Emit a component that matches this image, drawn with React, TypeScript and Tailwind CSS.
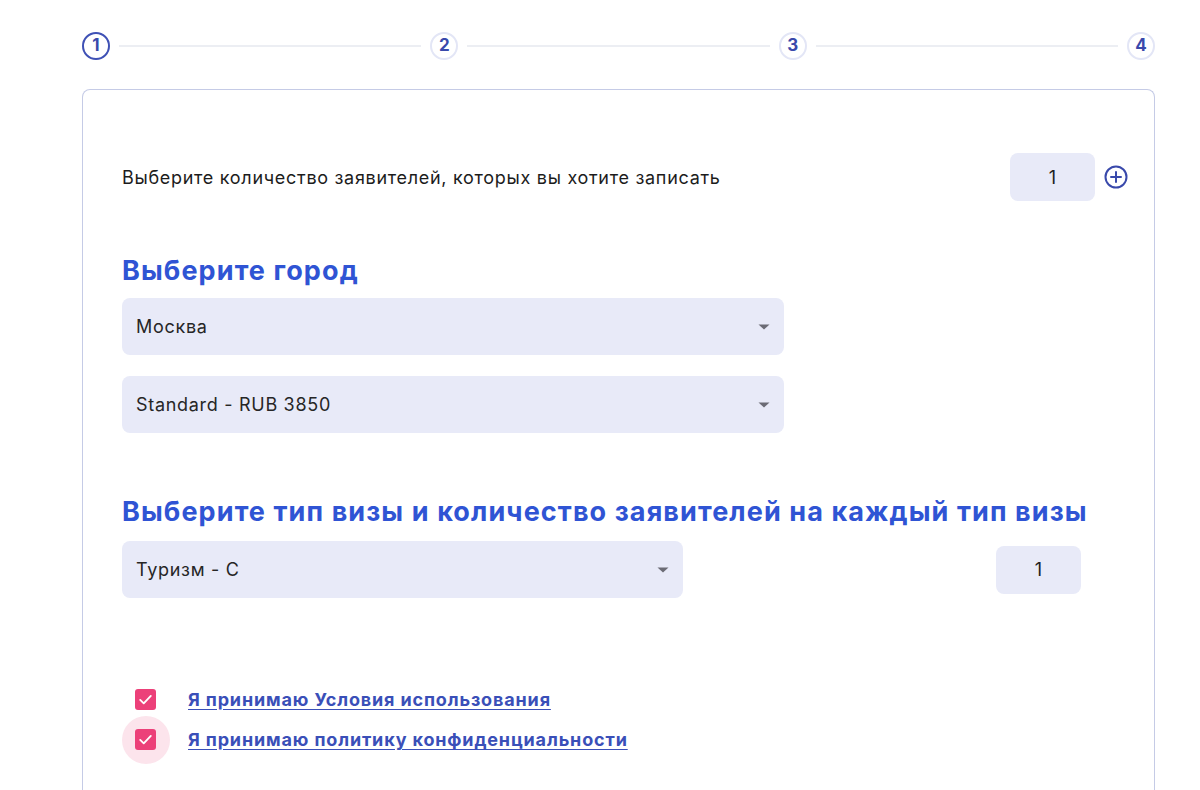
import React from "react";

const steps = [1, 2, 3, 4];

function Caret() {
  return (
    <svg width="12" height="6" viewBox="0 0 12 6" className="shrink-0">
      <path d="M0.5 0.5 L11.5 0.5 L6 5.5 Z" fill="#6b6b75" />
    </svg>
  );
}

function Select({ value, width }: { value: string; width: string }) {
  return (
    <div className={`flex h-[57px] items-center justify-between rounded-lg bg-[#e8eaf8] pl-[14px] pr-[14px] ${width}`}>
      <span className="text-[18px] tracking-[0.7px] text-[#262626]">{value}</span>
      <Caret />
    </div>
  );
}

function Counter() {
  return (
    <div className="flex h-12 w-[85px] items-center justify-center rounded-lg bg-[#e8eaf8] text-[18px] text-[#222]">
      1
    </div>
  );
}

function Check({ halo }: { halo?: boolean }) {
  return (
    <div className="relative flex h-[21px] w-[21px] items-center justify-center">
      {halo && <div className="absolute left-1/2 top-1/2 h-12 w-12 -translate-x-1/2 -translate-y-1/2 rounded-full bg-[#fce4ec]" />}
      <div className="relative flex h-[21px] w-[21px] items-center justify-center rounded-[3px] bg-[#ec4079]">
        <svg width="17" height="17" viewBox="0 0 24 24" fill="none" stroke="white" strokeWidth="2.6" strokeLinecap="round" strokeLinejoin="round">
          <path d="M4.5 12.5l5 5L19.5 7" />
        </svg>
      </div>
    </div>
  );
}

export default function App() {
  return (
    <div className="h-[790px] overflow-hidden bg-white font-['Inter',sans-serif]">
      <div className="ml-[82px] w-[1073px]">
        {/* шаги */}
        <div className="flex h-[89px] items-center pt-[3px]">
          {steps.map((s, i) => (
            <React.Fragment key={s}>
              <div
                className={`flex h-[28px] w-[28px] shrink-0 items-center justify-center rounded-full bg-white text-[17px] font-bold text-[#3949ab] ${
                  i === 0 ? "border-2 border-[#3f51b5]" : "border-2 border-[#e3e6f6]"
                }`}
              >
                {s}
              </div>
              {i < steps.length - 1 && <div className="mx-[9px] h-[2px] flex-1 bg-[#eceef3]" />}
            </React.Fragment>
          ))}
        </div>

        <div className="h-[720px] rounded-t-lg border border-b-0 border-[#c5cbe6] pl-[39px] pr-[26px] pt-[63px]">
          <div className="flex items-center justify-between">
            <span className="text-[18px] tracking-[0.7px] text-[#1c1c1c]">Выберите количество заявителей, которых вы хотите записать</span>
            <div className="flex items-center gap-[9px]">
              <Counter />
              <svg width="24" height="24" viewBox="0 0 24 24" fill="none" stroke="#3949ab" strokeWidth="2" strokeLinecap="round">
                <circle cx="12" cy="12" r="10.5" />
                <path d="M12 7v10M7 12h10" />
              </svg>
            </div>
          </div>

          <h2 className="mt-[52px] text-[27px] font-bold leading-[36px] tracking-[1.1px] text-[#2f54d4]">Выберите город</h2>
          <div className="mt-[9px] flex flex-col gap-[21px]">
            <Select value="Москва" width="w-[662px]" />
            <Select value="Standard - RUB 3850" width="w-[662px]" />
          </div>

          <h2 className="mt-[61px] text-[27px] font-bold leading-[36px] tracking-[1.1px] text-[#2f54d4]">
            Выберите тип визы и количество заявителей на каждый тип визы
          </h2>
          <div className="mt-[11px] flex w-[959px] items-center justify-between">
            <Select value="Туризм - C" width="w-[561px]" />
            <Counter />
          </div>

          <div className="mt-[89px] flex flex-col gap-[15px] pl-[13px]">
            <div className="flex h-[25px] items-center gap-[32px]">
              <Check />
              <a className="text-[18px] font-bold leading-[25px] tracking-[0.85px] text-[#3a4fb8] underline underline-offset-[3px]">Я принимаю Условия использования</a>
            </div>
            <div className="flex h-[25px] items-center gap-[32px]">
              <Check halo />
              <a className="text-[18px] font-bold leading-[25px] tracking-[0.85px] text-[#3a4fb8] underline underline-offset-[3px]">Я принимаю политику конфиденциальности</a>
            </div>
          </div>
        </div>
      </div>
    </div>
  );
}
